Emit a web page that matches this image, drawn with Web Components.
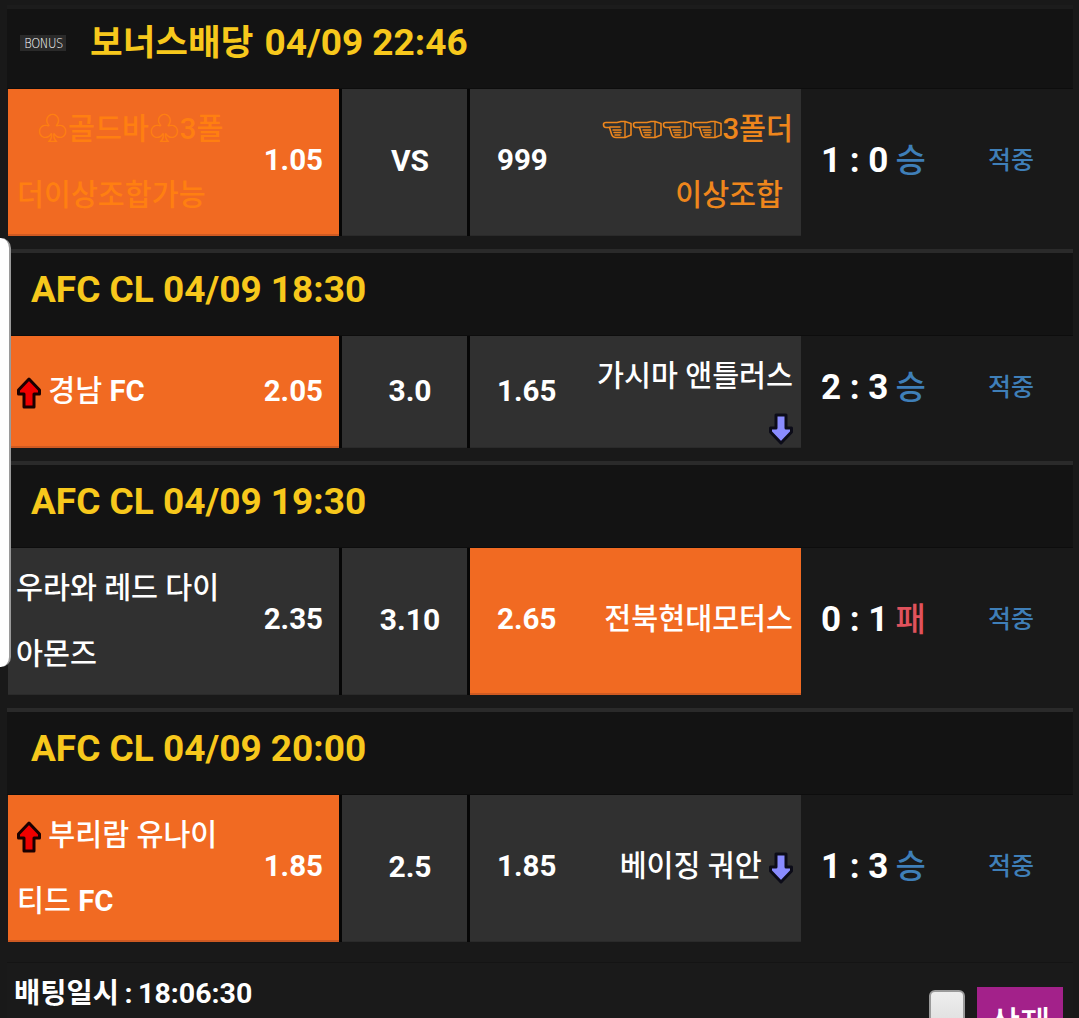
<!DOCTYPE html>
<html lang="ko">
<head>
<meta charset="utf-8">
<title>bet slip</title>
<style>
  html, body { margin: 0; height: 1018px; overflow: hidden; background: #191919; }
  body { font-family: Roboto, "Noto Sans CJK KR", sans-serif; color: #fff; }
  b { font-weight: 700; }
  .club { font-size: 31px; }
</style>
</head>
<body>
<bet-slip>
  <game-section title="04/09 22:46" label="보너스배당" bonus first>
    <game-row home-odds="1.05" mid="VS" away-odds="999" score="1 : 0" outcome="승" picked="home">
      <span slot="home" style="display:block;padding-top:4px;color:#ff7f11"><span style="padding-left:20px"><span class="club">♧</span>골드바<span class="club">♧</span>3폴</span><br>더이상조합가능</span>
      <span slot="away" style="display:block;padding-top:4px;color:#ee861c"><hand-icon></hand-icon><hand-icon></hand-icon><hand-icon></hand-icon><hand-icon></hand-icon>3폴더<br><span style="padding-right:10px">이상조합</span></span>
    </game-row>
  </game-section>
  <game-section title="AFC CL 04/09 18:30">
    <game-row home-odds="2.05" mid="3.0" away-odds="1.65" score="2 : 3" outcome="승" picked="home" short>
      <span slot="home"><trend-arrow dir="up"></trend-arrow> 경남 <b>FC</b></span>
      <span slot="away" style="display:block">가시마 앤틀러스<span style="display:block;line-height:36px;height:36px"><trend-arrow dir="down"></trend-arrow></span></span>
    </game-row>
  </game-section>
  <game-section title="AFC CL 04/09 19:30">
    <game-row home-odds="2.35" mid="3.10" away-odds="2.65" score="0 : 1" outcome="패" picked="away">
      <span slot="home" style="display:block;padding-top:4px;margin-left:-1px">우라와 레드 다이<br>아몬즈</span>
      <span slot="away">전북현대모터스</span>
    </game-row>
  </game-section>
  <game-section title="AFC CL 04/09 20:00">
    <game-row home-odds="1.85" mid="2.5" away-odds="1.85" score="1 : 3" outcome="승" picked="home">
      <span slot="home" style="display:block;padding-top:4px"><trend-arrow dir="up"></trend-arrow> 부리람 유나이<br>티드 <b>FC</b></span>
      <span slot="away">베이징 궈안 <trend-arrow dir="down"></trend-arrow></span>
    </game-row>
  </game-section>
  <slip-footer time="18:06:30"></slip-footer>
</bet-slip>

<script>
class BetSlip extends HTMLElement {
  constructor() {
    super();
    this.attachShadow({ mode: 'open' });
    this.shadowRoot.innerHTML = `
      <style>
        :host { display: block; padding: 0 6px 0 7px; position: relative; }
        .rail {
          position: absolute; left: 0; top: 233px; width: 9px; height: 429px;
          background: #fff; border-right: 2px solid #9a9a9a; border-radius: 0 10px 10px 0;
        }
      </style>
      <slot></slot>
      <div class="rail"></div>
    `;
  }
}

class GameSection extends HTMLElement {
  constructor() {
    super();
    this.attachShadow({ mode: 'open' });
    const bonus = this.hasAttribute('bonus');
    const label = this.getAttribute('label');
    this.shadowRoot.innerHTML = `
      <style>
        :host { display: block; margin-top: 13px; }
        :host([first]) { margin-top: 5px; }
        .head {
          border-top: 4px solid #2a2a2a; height: 87px; box-sizing: border-box;
          background: #131313; display: flex; align-items: center; gap: 24px;
          padding: 0 0 10px 24px; border-bottom: 1px solid #0d0d0d;
        }
        :host([first]) .head { height: 84px; border-top-color: #1c1c1c; padding-left: 13px; padding-bottom: 11px; }
        h2 { margin: 0; font: 700 37px/1 Roboto, "Noto Sans CJK KR", sans-serif; color: #f7c81c; white-space: nowrap; }
        h2 span { font-size: 35.5px; margin-right: 2px; }
        .tag {
          width: 46px; height: 16px; background: #2a2a2a; color: #fff; overflow: hidden;
          font: 200 14px/16px "DejaVu Sans", sans-serif; text-align: center; letter-spacing: -.5px;
          font-stretch: condensed;
        }
        .tag i { display: inline-block; font-style: normal; transform: scaleX(.82); }
      </style>
      <div class="head">
        ${bonus ? '<span class="tag"><i>BONUS</i></span>' : ''}
        <h2>${label ? `<span>${label}</span> ` : ''}${this.getAttribute('title')}</h2>
      </div>
      <slot></slot>
    `;
  }
}

class GameRow extends HTMLElement {
  constructor() {
    super();
    this.attachShadow({ mode: 'open' });
    const a = n => this.getAttribute(n);
    const lost = a('outcome') === '패';
    this.shadowRoot.innerHTML = `
      <style>
        :host {
          display: grid; grid-template-columns: 331px 128px 334px 186px 1fr; padding-left: 1px;
          height: 147px; font: 500 29.3px/66px Roboto, "Noto Sans CJK KR", sans-serif; color: #fff;
        }
        :host([short]) { height: 112px; }
        .cell {
          background: #303030; display: flex; align-items: center; min-width: 0;
          box-shadow: inset 0 -1px 0 #2a2a2a;
        }
        .cell.on { background: #f16a22; box-shadow: inset 0 -2px 0 #cf5a22; }
        .home, .away { padding-bottom: 5px; box-sizing: border-box; }
        .home { padding-left: 9px; padding-right: 16px; }
        .mid, .away { border-left: 3px solid #060606; }
        .away { padding-left: 27px; padding-right: 8px; }
        :host([short]) .home { padding-bottom: 2px; }
        :host([short]) .away { padding-bottom: 0; }
        :host([short]) .away .odds { margin-bottom: 2px; }
        :host([short]) .away .name { align-self: flex-start; margin-top: 7px; }
        .name { flex: 1; white-space: nowrap; }
        .away .name { text-align: right; }
        .odds { font-weight: 700; font-size: 29.5px; }
        .mid { justify-content: center; font-weight: 700; font-size: 30px; padding: 0 0 3px 11px; }
        .score { display: flex; align-items: center; padding: 0 0 3px 20px; font-weight: 700; font-size: 35px; gap: 7px; }
        .res { font-size: 33px; font-weight: 500; color: ${lost ? '#e0525c' : '#3f7fb8'}; }
        .hit { display: flex; align-items: center; font-size: 25px; font-weight: 500; color: #3f7fb8; padding: 0 0 3px 1px; }
        :host([short]) .score, :host([short]) .hit { padding-bottom: 8px; }
      </style>
      <div class="cell home ${a('picked') === 'home' ? 'on' : ''}">
        <div class="name"><slot name="home"></slot></div>
        <div class="odds">${a('home-odds')}</div>
      </div>
      <div class="cell mid">${a('mid')}</div>
      <div class="cell away ${a('picked') === 'away' ? 'on' : ''}">
        <div class="odds">${a('away-odds')}</div>
        <div class="name"><slot name="away"></slot></div>
      </div>
      <div class="score"><span>${a('score')}</span><span class="res">${a('outcome')}</span></div>
      <div class="hit">적중</div>
    `;
  }
}

class TrendArrow extends HTMLElement {
  constructor() {
    super();
    this.attachShadow({ mode: 'open' });
    const up = this.getAttribute('dir') === 'up';
    this.shadowRoot.innerHTML = `
      <style>
        :host { display: inline-block; width: 24px; height: 32px; vertical-align: middle; }
        svg { display: block; }
      </style>
      <svg width="24" height="32" viewBox="0 0 24 32">
        ${up
          ? '<path d="M12 2 L22.5 13 V17 H17 V30 H7 V17 H1.5 V13 Z" fill="#f00000" stroke="#1a0000" stroke-width="3" stroke-linejoin="round"/>'
          : '<path d="M7 2 H17 V15 H22.5 V19 L12 30 L1.5 19 V15 H7 Z" fill="#8a8cff" stroke="#0c0c18" stroke-width="3" stroke-linejoin="round"/>'}
      </svg>
    `;
  }
}

class HandIcon extends HTMLElement {
  constructor() {
    super();
    this.attachShadow({ mode: 'open' });
    this.shadowRoot.innerHTML = `
      <style>
        :host { display: inline-block; width: 30px; height: 20px; vertical-align: -1px; }
        svg { display: block; }
      </style>
      <svg width="30" height="20" viewBox="0 0 30 20" fill="none" stroke="#ee861c" stroke-linejoin="round" stroke-linecap="round">
        <path stroke-width="1.6" d="M1.5 4.5 Q1.5 2.5 4 2.5 H15 L19 1.5 H23 L29 3.5 V15 L23 17.5 H14 Q10.5 17.5 9.5 14 L7.5 7.5 H4 Q1.5 7.5 1.5 4.5 Z"/>
        <path stroke-width="1.4" d="M23 1.5 V17.5"/>
        <path stroke-width="1.5" d="M8 7 H18 M11 10 H19 M12 12.5 H19 M13 15 H18"/>
      </svg>
    `;
  }
}

class SlipFooter extends HTMLElement {
  constructor() {
    super();
    this.attachShadow({ mode: 'open' });
    this.shadowRoot.innerHTML = `
      <style>
        :host {
          display: flex; justify-content: space-between; margin-top: 20px; height: 56px; overflow: hidden;
          padding-left: 7px; border-top: 1px solid #141414; background: #1a1a1a;
          font: 700 29px/1 Roboto, "Noto Sans CJK KR", sans-serif; color: #fff;
        }
        .when { padding-top: 17px; font-size: 28.5px; word-spacing: -1.5px; }
        .acts { display: flex; gap: 12px; padding: 24px 10px 0 0; align-items: flex-start; }
        .check {
          width: 32px; height: 40px; margin-top: 3px; border: 2px solid #9a9a9a; border-radius: 6px;
          background: linear-gradient(#eee, #dcdcdc);
        }
        .del {
          width: 86px; height: 60px; background: #a3218a; color: #fff; border: 0; padding: 13px 0 0;
          font: 500 33px/1.2 Roboto, "Noto Sans CJK KR", sans-serif;
        }
      </style>
      <div class="when">배팅일시 : ${this.getAttribute('time')}</div>
      <div class="acts"><div class="check"></div><button class="del">삭제</button></div>
    `;
  }
}

customElements.define('bet-slip', BetSlip);
customElements.define('game-section', GameSection);
customElements.define('game-row', GameRow);
customElements.define('trend-arrow', TrendArrow);
customElements.define('hand-icon', HandIcon);
customElements.define('slip-footer', SlipFooter);
</script>
</body>
</html>
